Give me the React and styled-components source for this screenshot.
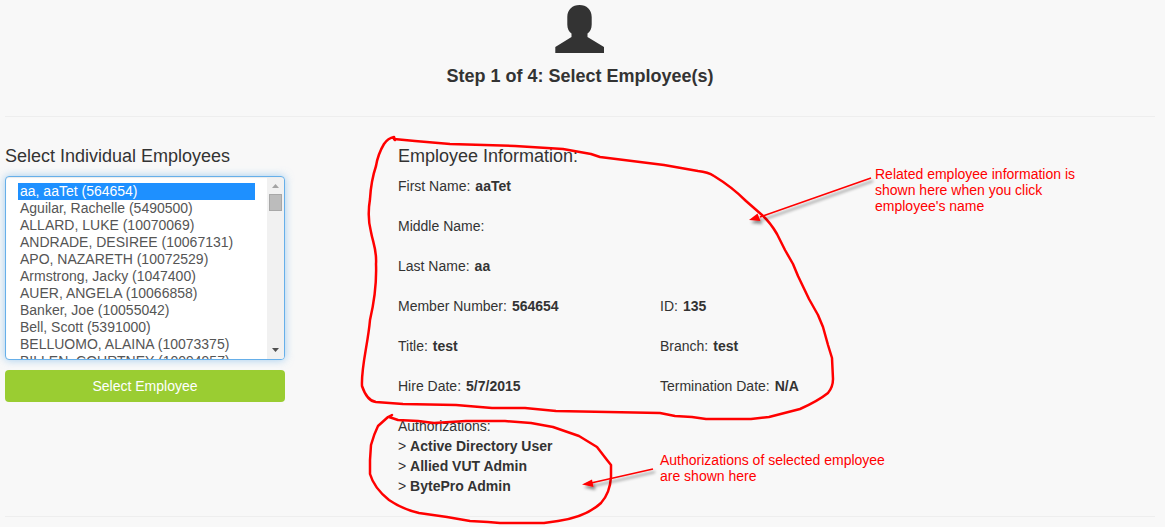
import React, { useState } from "react";
import styled, { createGlobalStyle } from "styled-components";

const GlobalStyle = createGlobalStyle`
  *, *::before, *::after { box-sizing: border-box; }
  body {
    margin: 0;
    background: #f8f8f8;
    color: #333;
    font: 14px/20px "Liberation Sans", Arial, sans-serif;
  }
`;

const Page = styled.main`
  position: relative;
  padding: 5px 10px 10px 5px;
`;

const StepHeader = styled.header`
  display: flex;
  flex-direction: column;
  align-items: center;
  gap: 13px;
  padding-bottom: 30px;
  border-bottom: 1px solid #eee;
`;

const StepTitle = styled.h1`
  margin: 0;
  font-size: 18px;
  line-height: 20px;
`;

const Columns = styled.div`
  display: grid;
  grid-template-columns: 280px minmax(0, 1fr);
  column-gap: 113px;
  padding: 29px 0 20px;
  border-bottom: 1px solid #eee;
`;

const Heading = styled.h2`
  margin: 0 0 10px;
  font-size: 18px;
  font-weight: 400;
  line-height: 20px;
`;

const Picker = styled.form`
  display: flex;
  flex-direction: column;
`;

const ListFrame = styled.div`
  position: relative;
  height: 184px;
  margin-bottom: 10px;
  border: 1px solid #66afe9;
  border-radius: 4px;
  background: #fff;
  box-shadow: inset 0 1px 1px rgba(0, 0, 0, 0.08), 0 0 8px rgba(102, 175, 233, 0.6);
`;

const EmployeeList = styled.select`
  display: block;
  width: 100%;
  height: 100%;
  padding: 6px 29px 6px 12px;
  border: 0;
  border-radius: 3px;
  outline: 0;
  background: transparent;
  color: #555;
  font: inherit;
  scrollbar-width: none;

  option {
    min-height: 17px;
    padding: 0 2px;
    line-height: 17px;
  }

  option:checked {
    background: #1e90ff linear-gradient(#1e90ff, #1e90ff);
    color: #fff;
    -webkit-text-fill-color: #fff;
  }
`;

const ScrollTrack = styled.div`
  position: absolute;
  top: 1px;
  right: 0;
  bottom: 0;
  width: 17px;
  display: flex;
  flex-direction: column;
  align-items: center;
  border-radius: 0 3px 3px 0;
  background: #f1f1f1;
  pointer-events: none;
`;

const ScrollThumb = styled.div`
  width: 13px;
  height: 17px;
  margin-bottom: auto;
  border: 1px solid #a8a8a8;
  background: #bcbcbc;
`;

const SubmitButton = styled.button`
  height: 32px;
  border: 0;
  border-radius: 4px;
  background: #9acd32;
  color: #fff;
  font: inherit;
  cursor: pointer;
`;

const Details = styled.dl`
  display: grid;
  grid-template-columns: 262px minmax(0, 1fr);
  row-gap: 20px;
  margin: 0 0 20px;
`;

const Field = styled.div`
  grid-column: ${({ $wide }) => ($wide ? "1 / -1" : "auto")};
  display: flex;
  gap: 5px;

  dt, dd { margin: 0; }
  dd { font-weight: 700; }
`;

const AuthorizationTitle = styled.h3`
  margin: 0;
  font-size: 14px;
  font-weight: 400;
  line-height: 20px;
`;

const AuthorizationList = styled.ul`
  margin: 0;
  padding: 0;
  list-style: none;
  font-weight: 700;

  li::before {
    content: "> ";
    font-weight: 400;
  }
`;

const Markup = styled.svg`
  position: absolute;
  top: 0;
  left: 0;
  pointer-events: none;
`;

const Note = styled.p`
  position: absolute;
  top: ${({ $top }) => $top}px;
  left: ${({ $left }) => $left}px;
  width: 240px;
  margin: 0;
  color: #f00;
  font-size: 14px;
  line-height: 16px;
`;

const employees = [
  "aa, aaTet (564654)",
  "Aguilar, Rachelle (5490500)",
  "ALLARD, LUKE (10070069)",
  "ANDRADE, DESIREE (10067131)",
  "APO, NAZARETH (10072529)",
  "Armstrong, Jacky (1047400)",
  "AUER, ANGELA (10066858)",
  "Banker, Joe (10055042)",
  "Bell, Scott (5391000)",
  "BELLUOMO, ALAINA (10073375)",
  "BILLEN, COURTNEY (10094957)",
];

const fields = [
  { label: "First Name:", value: "aaTet", wide: true },
  { label: "Middle Name:", value: "", wide: true },
  { label: "Last Name:", value: "aa", wide: true },
  { label: "Member Number:", value: "564654" },
  { label: "ID:", value: "135" },
  { label: "Title:", value: "test" },
  { label: "Branch:", value: "test" },
  { label: "Hire Date:", value: "5/7/2015" },
  { label: "Termination Date:", value: "N/A" },
];

const authorizations = ["Active Directory User", "Allied VUT Admin", "BytePro Admin"];

function PersonIcon() {
  return (
    <svg width="50" height="48" viewBox="0 0 50 48" fill="#333" aria-hidden="true">
      <path d="M24.500 0C17.500 0 12.300 4.500 12.300 12v7.500C12.300 24 14 26.500 16.500 28.500V32L0.300 42V48H49V42L32.500 32V28.500C35 26.500 36.700 24 36.700 19.500V12C36.700 4.500 31.500 0 24.500 0Z" />
    </svg>
  );
}

function Annotations() {
  return (
    <Markup width="1165" height="527" viewBox="0 0 1165 527" fill="none" aria-hidden="true">
      <defs>
        <filter id="arrow-shadow" x="-10%" y="-30%" width="125%" height="180%">
          <feDropShadow dx="2" dy="3" stdDeviation="1.500" floodColor="#000" floodOpacity="0.45" />
        </filter>
      </defs>
      <g stroke="#f00" strokeWidth="2.500" strokeLinecap="round" strokeLinejoin="round">
        <path d="M395 140L394 137Q388 138 384 144Q378 154 376 166Q371 181 370 199Q367 217 371 232C373 243 377 250 376 264Q377 290 370 320C368 344 361 367 362 386Q367 401 376 402L403 404L456 405L492 408L525 408L556 411L660 413L675 416L692 417L706 419H751L769 417L800 409Q818 401 828 393Q833 387 833 379L832 358L828 345L823 327L818 315L809 299L798 276L793 264L785 250L777 234Q770 222 762 215L746 201Q732 187 714 176Q708 172 698 171L664 165L600 157L591 154L563 149L515 146L450 144L415 141L394 139Z" />
        <path d="M392 415L389 417L398 420L418 421L434 423L466 421H505L531 423L553 427L579 436L597 447L607 460L611 465V477Q610 493 601 503Q586 517 558 521L544 523H500L488 522L470 521L447 517L419 513Q402 509 389 500Q374 488 370 474V460L371 445Q374 434 378 426L388 417Z" />
      </g>
      <g filter="url(#arrow-shadow)" fill="#f00">
        <path d="M871 178L760 217" stroke="#f00" strokeWidth="1.500" />
        <path d="M749 220L757.500 213.500L760.500 221Z" />
      </g>
      <g filter="url(#arrow-shadow)" fill="#f00">
        <path d="M653 469L591 483" stroke="#f00" strokeWidth="1.500" />
        <path d="M582 484.500L592 479.500L593.500 487Z" />
      </g>
    </Markup>
  );
}

export default function App() {
  const [selected, setSelected] = useState([employees[0]]);

  return (
    <>
      <GlobalStyle />
      <Page>
        <StepHeader>
          <PersonIcon />
          <StepTitle>Step 1 of 4: Select Employee(s)</StepTitle>
        </StepHeader>
        <Columns>
          <Picker onSubmit={(event) => event.preventDefault()}>
            <Heading as="label" htmlFor="employees">Select Individual Employees</Heading>
            <ListFrame>
              <EmployeeList
                id="employees"
                multiple
                value={selected}
                onChange={(event) =>
                  setSelected(Array.from(event.target.selectedOptions, (option) => option.value))
                }
              >
                {employees.map((name) => (
                  <option key={name} value={name}>{name}</option>
                ))}
              </EmployeeList>
              <ScrollTrack aria-hidden="true">
                <svg width="17" height="16" viewBox="0 0 17 16" fill="#a3a3a3">
                  <path d="M5 10L8.500 6L12 10Z" />
                </svg>
                <ScrollThumb />
                <svg width="17" height="17" viewBox="0 0 17 17" fill="#505050">
                  <path d="M5 6L8.500 10L12 6Z" />
                </svg>
              </ScrollTrack>
            </ListFrame>
            <SubmitButton type="submit">Select Employee</SubmitButton>
          </Picker>
          <section>
            <Heading>Employee Information:</Heading>
            <Details>
              {fields.map(({ label, value, wide }) => (
                <Field key={label} $wide={wide}>
                  <dt>{label}</dt>
                  <dd>{value}</dd>
                </Field>
              ))}
            </Details>
            <AuthorizationTitle>Authorizations:</AuthorizationTitle>
            <AuthorizationList>
              {authorizations.map((name) => (
                <li key={name}>{name}</li>
              ))}
            </AuthorizationList>
          </section>
        </Columns>
        <Annotations />
        <Note $top={166} $left={875}>
          Related employee information is<br />shown here when you click<br />employee's name
        </Note>
        <Note $top={452} $left={660}>
          Authorizations of selected employee<br />are shown here
        </Note>
      </Page>
    </>
  );
}
